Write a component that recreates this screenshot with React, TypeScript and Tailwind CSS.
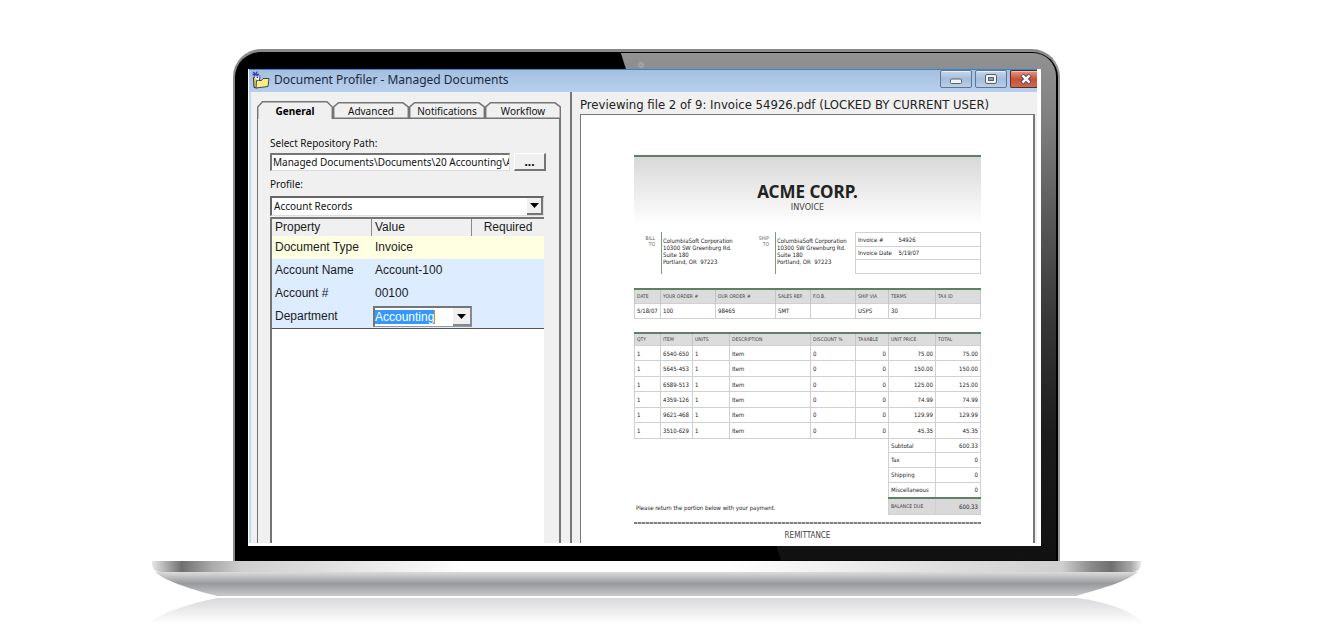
import type { ReactNode } from "react";

const tabs = ["General", "Advanced", "Notifications", "Workflow"];

const lineItems = [
  ["6540-650", "75.00"],
  ["5645-453", "150.00"],
  ["6589-513", "125.00"],
  ["4359-126", "74.99"],
  ["9621-468", "129.99"],
  ["3510-629", "45.35"],
];

const totals = [
  ["Subtotal", "600.33"],
  ["Tax", "0"],
  ["Shipping", "0"],
  ["Miscellaneous", "0"],
];

const verdanaLike = "font-['Noto_Sans',sans-serif]";
const tahomaLike = "font-['DejaVu_Sans_Condensed','Noto_Sans',sans-serif]";

function DownArrow() {
  return (
    <svg viewBox="0 0 9 5" className="h-[5px] w-[9px]" aria-hidden="true">
      <path d="M0 0H9L4.500 5Z" fill="#000" />
    </svg>
  );
}

function FolderIcon() {
  return (
    <svg viewBox="0 0 18 18" className="h-[18px] w-[18px] shrink-0" aria-hidden="true">
      <path d="M1.500 6.500L2 16.500L4.500 17L8 9.500L6 6.500Z" fill="#e9d24a" stroke="#22305c" />
      <path d="M4.500 9.500H9.500L11 7.500H17L16 15.500L4 17Z" fill="#fbee7c" stroke="#3c4466" />
      <path d="M1 1L6 5M5.500 0.500L2 5.500M0.500 3.500H7" stroke="#3a3fb4" strokeWidth="1.300" fill="none" />
      <path d="M3 6L6 8.500L7.500 5" stroke="#fff" strokeWidth="1.500" fill="none" />
      <path d="M8 4.500L7.500 8.500" stroke="#3a3fb4" />
    </svg>
  );
}

function TabOutline({ active }: { active: boolean }) {
  return (
    <svg
      viewBox="0 0 76 18"
      preserveAspectRatio="none"
      className="absolute inset-0 h-full w-full"
      aria-hidden="true"
    >
      <path
        d={active ? "M0.700 18V6L5.500 0.800H70L75.300 6V18" : "M0.700 17.200V6L5.500 1.800H70L75.300 6V17.200Z"}
        fill="#f0f0f0"
        stroke="#757575"
        strokeWidth="1.500"
      />
    </svg>
  );
}

function WindowButton({ label, danger, children }: { label: string; danger?: boolean; children: ReactNode }) {
  return (
    <button
      type="button"
      aria-label={label}
      className={
        danger
          ? "flex h-[18px] w-[27px] items-center justify-center rounded-l-[2px] border border-r-0 border-[#5c2a2a] bg-linear-to-b from-[#e39b89] via-[#c94f38] to-[#cd6a4c] inset-shadow-2xs inset-shadow-white/40"
          : "flex h-[18px] w-8 items-center justify-center rounded-[2px] border border-[#61758f] bg-linear-to-b from-[#c4d7ee] via-[#a5bdd9] to-[#b7cfeb] inset-shadow-2xs inset-shadow-white/60"
      }
    >
      {children}
    </button>
  );
}

function TitleBar() {
  return (
    <header className="flex h-[23px] items-start justify-between border-t border-[#2f84d4] bg-linear-to-b from-[#a5bfde] to-[#b7d0ef]">
      <div className="flex items-center gap-1 pl-[3px]">
        <FolderIcon />
        <h1 className="font-['Noto_Sans',sans-serif] text-xs leading-5 text-[#1c2a3c]">
          Document Profiler - Managed Documents
        </h1>
      </div>
      <div className="flex gap-[3px]">
        <WindowButton label="Minimize">
          <svg viewBox="0 0 14 12" className="h-3 w-3.5" aria-hidden="true">
            <rect x="1.500" y="6" width="11" height="4.500" rx="1" fill="#f4f4f4" stroke="#56606e" />
          </svg>
        </WindowButton>
        <WindowButton label="Maximize">
          <svg viewBox="0 0 14 12" className="h-3 w-3.5" aria-hidden="true">
            <rect x="1.500" y="1.500" width="11" height="9" rx="1.500" fill="#f4f4f4" stroke="#56606e" />
            <rect x="4.500" y="4.500" width="5" height="3" fill="#8ca5c4" stroke="#56606e" />
          </svg>
        </WindowButton>
        <WindowButton label="Close" danger>
          <svg viewBox="0 0 14 12" className="ml-1 h-3 w-3.5" aria-hidden="true">
            <path d="M3 2L11 10M11 2L3 10" stroke="#4d4552" strokeWidth="4.500" />
            <path d="M3.400 2.400L10.600 9.600M10.600 2.400L3.400 9.600" stroke="#f6f6f6" strokeWidth="2.600" />
          </svg>
        </WindowButton>
      </div>
    </header>
  );
}

function PropertyRow({ name, tint, children }: { name: string; tint: string; children: ReactNode }) {
  return (
    <tr className={tint}>
      <td className="h-[23px] pb-0.5 pl-[3px]">{name}</td>
      <td className="pb-0.5 pl-[3px]">{children}</td>
      <td />
    </tr>
  );
}

function ProfilePanel() {
  return (
    <section className="flex w-[321px] shrink-0 flex-col border-l-2 border-[#c3d7f0] pr-[9px] pl-1.5">
      <div role="tablist" className={`flex pt-[9px] text-[10px] text-[#111] ${verdanaLike}`}>
        {tabs.map((tab, i) => (
          <button
            key={tab}
            type="button"
            role="tab"
            aria-selected={i === 0}
            className={`relative h-[18px] flex-1 pt-px leading-[18px] ${i === 0 ? "font-bold text-black" : ""}`}
          >
            <TabOutline active={i === 0} />
            <span className="relative">{tab}</span>
          </button>
        ))}
      </div>
      <div
        role="tabpanel"
        className="flex flex-1 flex-col border-r-2 border-l border-[#757575] pt-4 pr-[13px] pl-3"
      >
        <label htmlFor="repo" className={`text-[10px] leading-4 text-[#111] ${verdanaLike}`}>
          Select Repository Path:
        </label>
        <div className="mt-0.5 flex h-[18px] gap-1">
          <input
            id="repo"
            readOnly
            defaultValue="Managed Documents\Documents\20 Accounting\Accounts"
            className={`min-w-0 flex-1 border-t-2 border-r border-b border-l-2 border-t-[#757575] border-r-[#ddd] border-b-[#ddd] border-l-[#757575] bg-white pl-px text-[10px] text-[#111] outline-none ${verdanaLike}`}
          />
          <button
            type="button"
            aria-label="Browse"
            className="flex w-8 items-center justify-center border-t border-r-2 border-b-2 border-l border-t-white border-r-[#757575] border-b-[#757575] border-l-white bg-[#f0f0f0] text-xs leading-none font-bold"
          >
            ...
          </button>
        </div>
        <label htmlFor="profile" className={`mt-[5px] text-[10px] leading-4 text-[#111] ${verdanaLike}`}>
          Profile:
        </label>
        <div className="relative mt-1 mr-0.5 flex h-5">
          <select
            id="profile"
            className={`w-full appearance-none border-t-2 border-r border-b border-l-2 border-t-[#666] border-r-[#ddd] border-b-[#ddd] border-l-[#666] bg-white pb-0.5 pl-0.5 text-[10px] leading-4 text-[#111] outline-none ${verdanaLike}`}
          >
            <option>Account Records</option>
          </select>
          <span className="pointer-events-none absolute top-0.5 right-px bottom-px flex w-4 items-center justify-center border-r-2 border-b-2 border-[#757575] bg-[#f0f0f0]">
            <DownArrow />
          </span>
        </div>
        <div className="mt-px mr-0.5 flex-1 border-t-2 border-l-2 border-[#757575] bg-white font-['Liberation_Sans',sans-serif] text-xs leading-4 text-[#1b1b1b]">
          <table className="w-full table-fixed border-separate border-spacing-0 border-b border-[#555]">
            <colgroup>
              <col className="w-[100px]" />
              <col className="w-[100px]" />
              <col />
            </colgroup>
            <thead>
              <tr className="bg-[#f0f0f0]">
                <th className="h-[17px] border-r border-[#888] pb-px pl-[3px] text-left font-normal">Property</th>
                <th className="border-r border-[#888] pb-px pl-[3px] text-left font-normal">Value</th>
                <th className="pb-px font-normal">Required</th>
              </tr>
            </thead>
            <tbody>
              <PropertyRow name="Document Type" tint="bg-[#ffffe1]">
                Invoice
              </PropertyRow>
              <PropertyRow name="Account Name" tint="bg-[#ddedff]">
                Account-100
              </PropertyRow>
              <PropertyRow name="Account #" tint="bg-[#ddedff]">
                00100
              </PropertyRow>
              <tr className="bg-[#ddedff]">
                <td className="h-[23px] pb-px pl-[3px]">Department</td>
                <td>
                  <div className="ml-px flex h-[21px] items-stretch justify-between border-t-2 border-r-2 border-b border-l-2 border-t-[#757575] border-r-[#8a8a8a] border-b-[#999] border-l-[#757575] bg-white">
                    <input
                      aria-label="Department"
                      defaultValue="Accounting"
                      className="my-0.5 w-[60px] border-r border-[#e08b2c] bg-[#3399ff] text-xs leading-[14px] text-white outline-none"
                    />
                    <button
                      type="button"
                      aria-label="Open department list"
                      className="flex w-[17px] items-center justify-center border-b-2 border-[#888] bg-[#f0f0f0]"
                    >
                      <DownArrow />
                    </button>
                  </div>
                </td>
                <td />
              </tr>
            </tbody>
          </table>
        </div>
      </div>
    </section>
  );
}

function Address({ kind }: { kind: string }) {
  return (
    <div className="flex min-w-0 gap-1.5">
      <p className="w-[21px] shrink-0 pt-[3px] text-right text-[5px] leading-[6px] text-[#666]">
        {kind}
        <br />
        TO
      </p>
      <address className="border-l border-[#7c9a80] pt-[5px] pb-1 pl-px leading-[7px] whitespace-pre not-italic">
        ColumbiaSoft Corporation
        <br />
        10300 SW Greenburg Rd.
        <br />
        Suite 180
        <br />
        {"Portland, OR  97223"}
      </address>
    </div>
  );
}

function Invoice() {
  const head = "border-t-2 border-t-[#5f8065] bg-[#dcdcdc] text-left text-[5px] text-[#444]";
  return (
    <article className={`mt-10 mr-[52px] ml-[53px] text-[6px] leading-[7px] text-[#222] ${tahomaLike}`}>
      <header className="h-[77px] border-t-2 border-[#5f8065] bg-linear-to-b from-[#d8d8d8] to-white to-90% pt-[25px] text-center">
        <h2 className="font-['Noto_Sans',sans-serif] text-[17px] leading-5 font-bold text-[#222]">ACME CORP.</h2>
        <p className="text-[9px] leading-[10px] text-[#444]">INVOICE</p>
      </header>

      <div className="grid grid-cols-[114px_1fr_126px]">
        <Address kind="BILL" />
        <Address kind="SHIP" />
        <table className="h-[42px] w-full border-collapse border border-[#d0d0d0]">
          <tbody>
            <tr className="border-b border-[#d0d0d0]">
              <th className="w-[41px] pl-0.5 text-left font-normal">Invoice #</th>
              <td className="pl-0.5">54926</td>
            </tr>
            <tr className="border-b border-[#d0d0d0]">
              <th className="pl-0.5 text-left font-normal">Invoice Date</th>
              <td className="pl-0.5">5/19/07</td>
            </tr>
            <tr>
              <td colSpan={2}>&nbsp;</td>
            </tr>
          </tbody>
        </table>
      </div>

      <table className="mt-3.5 w-full table-fixed border-collapse [&_td]:border [&_td]:border-[#d0d0d0] [&_td]:px-0.5 [&_th]:border-x [&_th]:border-x-[#c4c4c4] [&_th]:px-0.5 [&_th]:font-normal">
        <colgroup>
          <col className="w-[26px]" />
          <col className="w-[55px]" />
          <col className="w-[60px]" />
          <col className="w-[35px]" />
          <col className="w-[45px]" />
          <col className="w-[33px]" />
          <col className="w-[47px]" />
          <col />
        </colgroup>
        <thead>
          <tr className={head}>
            {["DATE", "YOUR ORDER #", "OUR ORDER #", "SALES REP.", "F.O.B.", "SHIP VIA", "TERMS", "TAX ID"].map((h) => (
              <th key={h} className="h-3.5 whitespace-nowrap">
                {h}
              </th>
            ))}
          </tr>
        </thead>
        <tbody>
          <tr>
            <td className="h-[15px] whitespace-nowrap">5/18/07</td>
            <td>100</td>
            <td>98465</td>
            <td>SMT</td>
            <td />
            <td>USPS</td>
            <td>30</td>
            <td />
          </tr>
        </tbody>
      </table>

      <table className="mt-[13px] h-[107px] w-full table-fixed border-collapse [&_td]:border [&_td]:border-[#d0d0d0] [&_td]:px-0.5 [&_th]:border-x [&_th]:border-x-[#c4c4c4] [&_th]:px-0.5 [&_th]:font-normal">
        <colgroup>
          <col className="w-[26px]" />
          <col className="w-8" />
          <col className="w-[37px]" />
          <col className="w-[81px]" />
          <col className="w-[45px]" />
          <col className="w-[33px]" />
          <col className="w-[47px]" />
          <col />
        </colgroup>
        <thead>
          <tr className={head}>
            {["QTY", "ITEM", "UNITS", "DESCRIPTION", "DISCOUNT %", "TAXABLE", "UNIT PRICE", "TOTAL"].map((h) => (
              <th key={h} className="h-[13px] whitespace-nowrap">
                {h}
              </th>
            ))}
          </tr>
        </thead>
        <tbody>
          {lineItems.map(([item, price]) => (
            <tr key={item}>
              <td>1</td>
              <td className="whitespace-nowrap">{item}</td>
              <td>1</td>
              <td>Item</td>
              <td>0</td>
              <td className="text-right">0</td>
              <td className="text-right">{price}</td>
              <td className="text-right">{price}</td>
            </tr>
          ))}
        </tbody>
      </table>

      <div className="flex items-end justify-between">
        <p className="pb-1 pl-0.5">Please return the portion below with your payment.</p>
        <table className="h-[76px] w-[93px] table-fixed border-collapse [&_td]:border [&_td]:border-t-0 [&_td]:border-[#d0d0d0] [&_td]:px-0.5 [&_th]:border [&_th]:border-t-0 [&_th]:border-[#d0d0d0] [&_th]:px-0.5 [&_th]:text-left [&_th]:font-normal">
          <colgroup>
            <col className="w-[47px]" />
            <col />
          </colgroup>
          <tbody>
            {totals.map(([label, value]) => (
              <tr key={label}>
                <th>{label}</th>
                <td className="text-right">{value}</td>
              </tr>
            ))}
            <tr className="border-t-2 border-[#5f8065] bg-[#d9d9d9]">
              <th className="text-[5px] text-[#444]">BALANCE DUE</th>
              <td className="text-right">600.33</td>
            </tr>
          </tbody>
        </table>
      </div>

      <div className="mt-[7px] h-0.5 bg-[repeating-linear-gradient(90deg,#808080_0_3px,#c4c4c4_3px_4px)]" />
      <p className="pt-[7px] pb-0.5 text-center text-[8px] leading-[10px] text-[#444]">REMITTANCE</p>
    </article>
  );
}

function LaptopBase() {
  return (
    <div className="w-full">
      <div className="h-[11px] rounded-bl-[8px] rounded-br-[8px] bg-[linear-gradient(90deg,#e8e8e8_0%,#6f6f6f_3%,#a9a9a9_6%,#cfcfcf_9%,#dedede_17%,#ffffff_32%,#ffffff_58%,#dedede_80%,#cfcfcf_92%,#8a8a8a_95%,#6f6f6f_97%,#a9a9a9_99%,#e8e8e8_100%)]" />
      <svg viewBox="0 0 989 54" preserveAspectRatio="none" className="block h-[54px] w-full" aria-hidden="true">
        <defs>
          <linearGradient id="under" x1="0" y1="0" x2="0" y2="1">
            <stop offset="0" stopColor="#dcdcdc" />
            <stop offset="0.480" stopColor="#98999c" />
            <stop offset="1" stopColor="#c9c9cc" />
          </linearGradient>
          <linearGradient id="mirror" x1="0" y1="0" x2="0" y2="1">
            <stop offset="0" stopColor="#d9d9dc" />
            <stop offset="1" stopColor="#fff" />
          </linearGradient>
        </defs>
        <path d="M3 0H986C974 10 948 17 924 24H65C42 18 15 10 3 0Z" fill="url(#under)" />
        <path d="M65 26H924C950 29 974 36 989 49V52H0V48C15 39 40 31 65 26Z" fill="url(#mirror)" />
      </svg>
    </div>
  );
}

export default function App() {
  return (
    <main className="min-h-screen bg-white pt-[49px] pr-[30px]">
      <div className="mx-auto w-full max-w-[989px]">
        <div className="mx-[81px] rounded-t-[28px] border-x-2 border-t-[3px] border-[#8a8a8a] border-r-[#9c9898] bg-black">
          <div className="relative overflow-hidden rounded-t-[25px] px-[13px] pt-[17px] pb-[15px]">
            <div className="absolute inset-x-0 top-px right-0.5 bottom-0 rounded-tr-[23px] bg-[linear-gradient(180deg,#929292_0%,#7c7c7c_15%,#5a5a5a_32%,#383838_52%,#1c1c1c_75%,#111111_100%)] [clip-path:polygon(47%_0,100%_0,100%_100%,66.5%_100%)]" />
            <div className="absolute top-2.5 left-[49%] h-1.5 w-1.5 rounded-full border border-[#aaa] bg-[#999]" />
            <div className="relative mr-1 bg-white pr-1 pb-[3px] pl-px">
              <div className="bg-[#f0f0f0]">
                <TitleBar />
                <div className="flex">
                  <ProfilePanel />
                  <section className="min-w-0 flex-1 border-l-2 border-[#777] pr-0.5 pl-2">
                    <p className={`truncate pt-1 text-[13px] leading-[18px] text-[#222] ${tahomaLike}`}>
                      Previewing file 2 of 9: Invoice 54926.pdf (LOCKED BY CURRENT USER)
                    </p>
                    <div className="overflow-hidden border-t border-r-2 border-l border-[#777] bg-white">
                      <Invoice />
                    </div>
                  </section>
                </div>
              </div>
            </div>
          </div>
        </div>
        <LaptopBase />
      </div>
    </main>
  );
}
